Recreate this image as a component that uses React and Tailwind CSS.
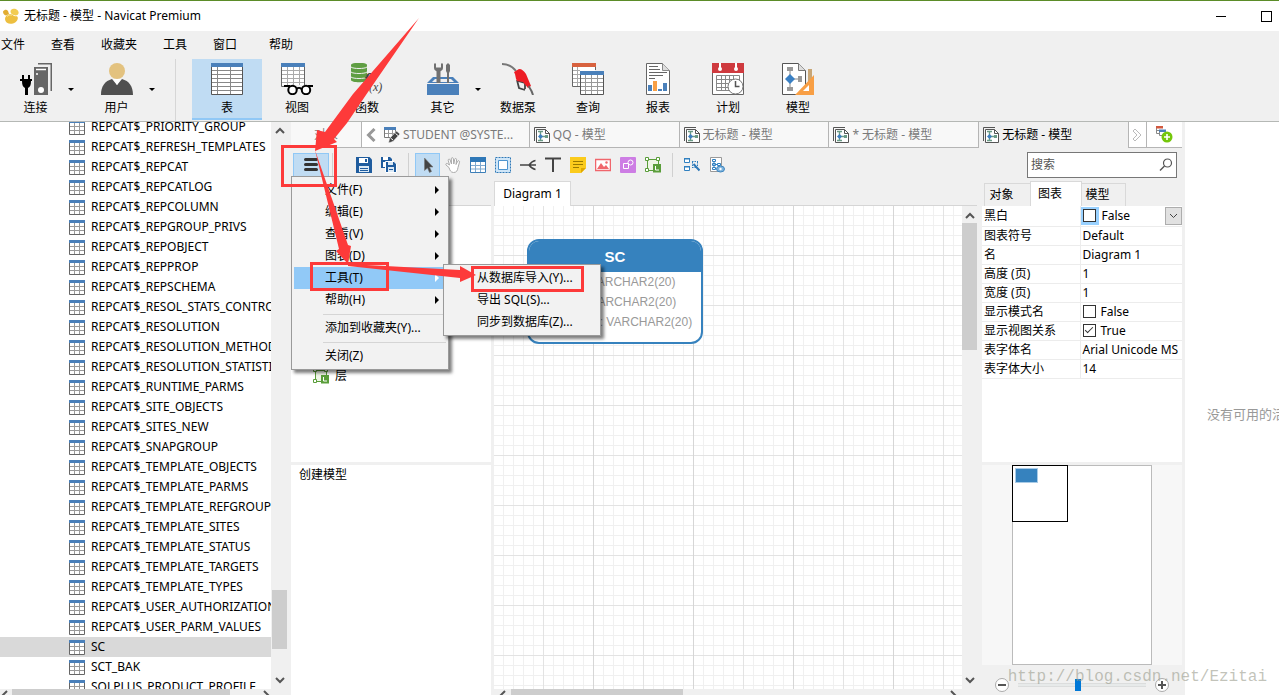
import React, { useState } from 'react';

const TABLES = [
  'REPCAT$_PRIORITY_GROUP', 'REPCAT$_REFRESH_TEMPLATES', 'REPCAT$_REPCAT', 'REPCAT$_REPCATLOG',
  'REPCAT$_REPCOLUMN', 'REPCAT$_REPGROUP_PRIVS', 'REPCAT$_REPOBJECT', 'REPCAT$_REPPROP',
  'REPCAT$_REPSCHEMA', 'REPCAT$_RESOL_STATS_CONTROL', 'REPCAT$_RESOLUTION', 'REPCAT$_RESOLUTION_METHOD',
  'REPCAT$_RESOLUTION_STATISTICS', 'REPCAT$_RUNTIME_PARMS', 'REPCAT$_SITE_OBJECTS', 'REPCAT$_SITES_NEW',
  'REPCAT$_SNAPGROUP', 'REPCAT$_TEMPLATE_OBJECTS', 'REPCAT$_TEMPLATE_PARMS', 'REPCAT$_TEMPLATE_REFGROUPS',
  'REPCAT$_TEMPLATE_SITES', 'REPCAT$_TEMPLATE_STATUS', 'REPCAT$_TEMPLATE_TARGETS', 'REPCAT$_TEMPLATE_TYPES',
  'REPCAT$_USER_AUTHORIZATIONS', 'REPCAT$_USER_PARM_VALUES', 'SC', 'SCT_BAK', 'SQLPLUS_PRODUCT_PROFILE',
];

/* ---------- 小图标 ---------- */

function Svg({ size = 16, children }) {
  return (
    <svg width={size} height={size} viewBox={`0 0 ${size} ${size}`} fill="none" className="shrink-0">
      {children}
    </svg>
  );
}

const TableIcon = () => (
  <Svg>
    <path d="M0.5 3v12.5h15V3" fill="#fff" stroke="#666" />
    <path d="M1 7.5h14M1 11.5h14M5.5 4v11M10.5 4v11" stroke="#999" />
    <path d="M0 1h16v3H0z" fill="#4a80ba" />
  </Svg>
);

const ModelIcon = () => (
  <Svg>
    <path d="M0.5 14V0.5H12" stroke="#555" />
    <path d="M2.5 2.5h9l4 4v9h-13z" fill="#fff" stroke="#555" />
    <path d="M11.5 2.5v4h4" stroke="#555" />
    <path d="M4 4.5h5M4 13.5h5M6.5 5v8M7 9.5h6" stroke="#6a9a86" strokeWidth="1.4" />
    <path d="M6.5 7l2.5 2.5L6.5 12 4 9.5z" fill="#3d7fc0" />
    <path d="M11 8h3v3h-3z" fill="#6a9a86" />
  </Svg>
);

const EditTableIcon = () => (
  <Svg>
    <path d="M0.5 2v8.5h11V2" fill="#fff" stroke="#777" />
    <path d="M1 6.5h10M4.5 3v7M8.5 3v7" stroke="#999" />
    <path d="M0 0h12v3H0z" fill="#4a80ba" />
    <path d="M12.500 4l3.500 3-7 7.500-4.500 1.500 1-4.500z" fill="#444" stroke="#f8f8f8" strokeWidth="0.6" />
    <path d="M11.500 6.500l2.500 2M6.500 11l2.500 2" stroke="#fff" />
  </Svg>
);

const SaveIcon = () => (
  <Svg>
    <path d="M0 0h13.500L16 2.500V16H0z" fill="#1f5c9e" />
    <path d="M3 1h9v5H3z" fill="#fff" />
    <path d="M9 2h2v3H9z" fill="#1f5c9e" />
    <path d="M3 9h10v6H3z" fill="#dce9f5" />
    <path d="M4 11.5h8M4 13.5h8" stroke="#1f5c9e" />
  </Svg>
);

const SaveAllIcon = () => (
  <Svg>
    <path d="M0 0h9l2 2v9H0z" fill="#1f5c9e" />
    <path d="M2 0h5v3H2zM2 5h2v5H2z" fill="#fff" />
    <path d="M4.5 4.5h8.500l2.500 2.500v8.500h-11z" fill="#1f5c9e" stroke="#fff" />
    <path d="M7 5h5v3H7zM7 10h6v5H7z" fill="#dce9f5" />
    <path d="M8 12.5h4" stroke="#1f5c9e" />
  </Svg>
);

const CursorIcon = () => (
  <Svg>
    <path d="M4.500 1v12.500l3-2.500 2 4.500 2-1-2-4.500H13z" fill="#444" stroke="#777" strokeWidth="0.6" />
  </Svg>
);

const HandIcon = () => (
  <Svg>
    <path
      d="M4 10.500L1 8c-.6-.9.500-2.200 1.600-1.300L4.500 8 3.200 3.300c-.2-1.300 1.500-1.700 1.900-.4L6.500 7 6.300 1.800c0-1.500 2-1.500 2.100 0L8.800 7l.9-4.700c.3-1.300 2-1 1.900.4L11 7.500l1.700-3.300c.7-1 2.200-.4 1.800.9L13 10.500c-.5 3.500-1.700 5-4.500 5S4.700 13 4 10.500z"
      fill="#fff" stroke="#aaa"
    />
  </Svg>
);

const GridIcon = () => (
  <Svg>
    <path d="M0.5 1.5h15v14H0.500z" fill="#fff" stroke="#3d7fb8" />
    <path d="M1 8.5h14M1 12h14M5.5 5v10M10.5 5v10" stroke="#7fa9cf" />
    <path d="M0 0h16v5H0z" fill="#2f78b7" />
  </Svg>
);

const RegionIcon = () => (
  <Svg>
    <path d="M0.5 0.5h15v15h-15z" fill="#cfe6f8" stroke="#2f78b7" strokeDasharray="2 1" />
    <path d="M3.5 3.5h9v9h-9z" fill="#fff" stroke="#4d94cf" />
  </Svg>
);

const RelationIcon = () => (
  <Svg>
    <path d="M0 8h16M15.500 3.500C12 4 10.500 6 9 8c1.500 2 3 4 6.500 4.500" stroke="#444" strokeWidth="1.500" />
  </Svg>
);

const TextIcon = () => (
  <Svg>
    <path d="M0 1.500h16M8 1v14" stroke="#444" strokeWidth="2" />
  </Svg>
);

const NoteIcon = () => (
  <Svg>
    <path d="M0 0h16v11l-5 5H0z" fill="#fbcb1c" />
    <path d="M16 11h-5v5z" fill="#e0a800" />
    <path d="M3 4.5h10M3 7.5h10M3 10.5h6" stroke="#9a7a00" />
  </Svg>
);

const ImageIcon = () => (
  <Svg>
    <path d="M0.5 2.5h15v11h-15z" fill="#fff" stroke="#f0666c" strokeWidth="1.500" />
    <path d="M2 12l4-6 3 4 2-2 3 4z" fill="#f0666c" />
    <circle cx="11.500" cy="5.500" r="1.200" fill="#f0666c" />
  </Svg>
);

const ShapeIcon = () => (
  <Svg>
    <rect width="16" height="16" rx="1" fill="#cd7de4" />
    <circle cx="10.500" cy="5.500" r="2.500" stroke="#fff" />
    <path d="M3.500 6.500h5v5h-5z" fill="#cd7de4" stroke="#fff" />
  </Svg>
);

const LayerIcon = () => (
  <Svg>
    <path d="M2.5 2.5h11v11h-11z" fill="#eef5e6" stroke="#5a9e3a" />
    <path d="M0.5 0.5h3v3h-3zM11.5 0.5h3v3h-3zM0.5 11.5h3v3h-3z" fill="#fff" stroke="#5a9e3a" />
    <path d="M8 7h8v8.500H8z" fill="#5a9e3a" />
    <path d="M10.500 9v4H14" stroke="#fff" />
  </Svg>
);

const AutoLayoutIcon = () => (
  <Svg>
    <path d="M0.5 1.500h5v4h-5zM0.5 9.500h5v4h-5z" fill="#fff" stroke="#3080c0" />
    <path d="M0 1h6v1.500H0zM0 9h6v1.500H0z" fill="#3080c0" />
    <path d="M8 4.5h6M8 10.5h5M8.500 5v6M13.500 5v4" stroke="#3080c0" strokeDasharray="1.500 1" />
    <path d="M9.500 7l6 6.500" stroke="#2f78b7" strokeWidth="2" />
  </Svg>
);

const PreviewIcon = () => (
  <Svg>
    <path d="M1.5 0.5h11v14h-11z" fill="#fff" stroke="#999" />
    <path d="M3.5 2.5h3v2h-3zM3.5 10.5h3v2h-3zM8.5 6.5h3v2h-3zM3.5 6.5h3v2h-3zM5 4.5v6M6.5 7.5h2" stroke="#3080c0" />
    <ellipse cx="11.500" cy="12" rx="4" ry="3" fill="#7db3dd" stroke="#3f86bf" />
    <circle cx="11.500" cy="12" r="1.200" fill="#fff" />
  </Svg>
);

const NewTabIcon = () => (
  <svg width="17" height="17" viewBox="0 0 17 17" fill="none">
    <path d="M0.5 1v6.500h7M1 4.5h6" stroke="#888" fill="#fff" />
    <path d="M0 0h7v2.500H0z" fill="#d1593f" />
    <path d="M3.5 4v5.500h6" stroke="#888" fill="#fff" />
    <path d="M3 3.500h7V6H3z" fill="#4a80ba" />
    <circle cx="11" cy="11" r="5.500" fill="#74c70b" />
    <path d="M8 11h6M11 8v6" stroke="#fff" strokeWidth="1.600" />
  </svg>
);

const Logo = () => (
  <svg width="16" height="16" viewBox="0 0 16 16">
    <path d="M0 3.500C1.500 1.500 3.500 1 5 3l1 3-3 1.500C1 7 0 5.500 0 3.500z" fill="#e2ad32" />
    <path d="M7.500 3.500c0-2 2-3 3.500-2.800 2.500 0 4.700 1.800 4.700 4.300-.7 2.500-3 3-5 2-1.700-.8-3.200-1.500-3.200-3.500z" fill="#f2cc52" />
    <path d="M2.500 9C4 6.500 7 5 9 6.500c1.500 1.500 3.500 2 5 1.800 1.500.7 1 4.200-1.500 6-3 2-6.500 2-8.500.5-1.800-1.500-2.500-3.800-1.500-5.800z" fill="#edbf40" />
    <path d="M4 8.500c1.500-1.500 3.500-2 4.500-1" stroke="#fbe79a" fill="none" />
  </svg>
);

/* ---------- 主工具栏图标 ---------- */

const ConnectIcon = () => (
  <Svg size={32}>
    <path d="M18 0.750h13.250V28" stroke="#666" strokeWidth="1.500" />
    <path d="M14 4h14v28H14z" fill="#666" />
    <path d="M16 6.500h10M16 11h2" stroke="#fff" strokeWidth="1.500" />
    <circle cx="21" cy="27" r="3" fill="#fff" />
    <path d="M3 12v5M9 12v5" stroke="#000" strokeWidth="2" />
    <path d="M0 16h12v2h-1c0 4-1 6-3 7v7H5v-7c-2-1-3-3-3-7H0z" fill="#000" />
  </Svg>
);

const UserIcon = () => (
  <Svg size={32}>
    <circle cx="16" cy="8" r="8" fill="#e3c27f" />
    <path d="M0 32c0-9 4-14 11-16l5 6 5-6c7 2 11 7 11 16z" fill="#505050" />
    <path d="M12 16l4 6 4-6z" fill="#fff" />
  </Svg>
);

const BigTableIcon = () => (
  <Svg size={32}>
    <path d="M0.5 2v29.500h31V2" fill="#fff" stroke="#555" />
    <path d="M1 7.5h30M1 11.5h30M1 15.5h30M1 19.5h30M1 23.5h30M1 27.5h30M6.5 4v27M19.5 4v27" stroke="#888" />
    <path d="M0 0h32v4H0z" fill="#4a80ba" />
  </Svg>
);

const ViewIcon = () => (
  <Svg size={32}>
    <path d="M0.5 2v21.500h5M23.5 2v20" stroke="#666" />
    <path d="M1 3h22v19H1z" fill="#fff" />
    <path d="M1 7.5h22M1 11.5h22M1 15.5h22M1 19.5h22M6.5 4v18M12.5 4v18M18.5 4v18" stroke="#aaa" />
    <path d="M0 0h24v4H0z" fill="#4a80ba" />
    <circle cx="11.500" cy="27" r="4.200" fill="#fff" stroke="#000" strokeWidth="2" />
    <circle cx="25" cy="27" r="4.200" fill="#fff" stroke="#000" strokeWidth="2" />
    <path d="M3 23h6M27 23h5M15.500 26c1.500-1.500 3.500-1.500 5 0" stroke="#000" strokeWidth="2" />
  </Svg>
);

const FunctionIcon = () => (
  <Svg size={32}>
    <path d="M0 2c0-3 16-3 16 0v15c0 3-16 3-16 0z" fill="#5f9e43" />
    <path d="M0 4c2 2 14 2 16 0M0 9c2 2 14 2 16 0M0 14c2 2 14 2 16 0" stroke="#efefef" />
    <text x="13" y="23" fontFamily="Liberation Serif" fontStyle="italic" fontWeight="bold" fontSize="18" fill="#444">f</text>
    <text x="18" y="28" fontFamily="Liberation Serif" fontStyle="italic" fontSize="12" fill="#444">(x)</text>
  </Svg>
);

const OtherIcon = () => (
  <Svg size={32}>
    <path d="M6 14h20l6 6H0z" fill="#4a80ba" />
    <path d="M8 16h16l3 3H5z" fill="#efefef" />
    <path d="M9.500 6h4v14h-4z" fill="#707070" />
    <path d="M7 1.500C7 0 9 0 9 1v3.500h5V1c0-1 2-1 2 .5V5c0 2-2 3.500-4.500 3.500S7 7 7 5z" fill="#707070" />
    <path d="M21 0l2 2v6l-1 2v10h-2V10l-1-2V2z" fill="#707070" />
    <path d="M0 21h32v11H0z" fill="#4a80ba" />
  </Svg>
);

const PumpIcon = () => (
  <Svg size={32}>
    <path d="M0 1c6 0 11 3 14 7" stroke="#777" strokeWidth="2" />
    <path d="M15 17l2 8 6 2M16 18l7 2v6" stroke="#444" strokeWidth="1.800" />
    <path d="M12 9l5-3c3 0 5 2 7 5l5 12-3 2-5-6-6-1c-2-3-1-6-3-9z" fill="#ed1c24" />
    <path d="M26.500 23c2 3 3.500 5 4.500 9" stroke="#666" strokeWidth="2" />
  </Svg>
);

const QueryIcon = () => (
  <Svg size={32}>
    <path d="M0.5 2v21.500h8M23.5 2v5" stroke="#666" />
    <path d="M1 3h22v5H8v15H1z" fill="#fff" />
    <path d="M1 7.5h7M1 11.5h7M1 15.5h7M1 19.5h7M5.500 4v19" stroke="#aaa" />
    <path d="M0 0h24v4H0z" fill="#d8623f" />
    <path d="M8.500 10v21.500h23V10" fill="#fff" stroke="#555" />
    <path d="M9 15.5h22M9 19.5h22M9 23.5h22M9 27.5h22M13.500 12v19M19.500 12v19M25.500 12v19" stroke="#999" />
    <path d="M8 8h24v4H8z" fill="#4a80ba" />
  </Svg>
);

const ReportIcon = () => (
  <Svg size={32}>
    <path d="M4.5 0.5h16l7 7v24h-23z" fill="#fff" stroke="#666" />
    <path d="M20.5 0.5v7h7" fill="#ddd" stroke="#888" />
    <path d="M7 3.500h9M7 6.500h11M7 9.500h18M7 12.500h14M7 15.500h6" stroke="#666" />
    <path d="M6 22h4v6H6zM21 20h4v8h-4zM16 26h4v2h-4z" fill="#4a80ba" />
    <path d="M11 18h4v10h-4z" fill="#f89f45" />
  </Svg>
);

const ScheduleIcon = () => (
  <Svg size={32}>
    <path d="M0.5 8v23.500h31V8" fill="#fff" stroke="#666" />
    <path d="M0 0h32v10H0z" fill="#cf3a3f" />
    <path d="M8 0v6M24 0v6" stroke="#fff" strokeWidth="2" />
    <circle cx="8" cy="6" r="2" fill="#fff" />
    <circle cx="24" cy="6" r="2" fill="#fff" />
    <path d="M4.5 12.5h23v15h-23zM5 16.5h22M5 20.5h22M5 24.5h22M9.5 13v14M13.5 13v14M17.5 13v14M21.5 13v14" stroke="#888" />
    <circle cx="23.500" cy="23.500" r="7.500" fill="#fff" stroke="#777" />
    <path d="M23.500 18v5.500h4" stroke="#555" strokeWidth="1.500" />
  </Svg>
);

const BigModelIcon = () => (
  <Svg size={32}>
    <path d="M0.5 0.5h16l7 7v24h-23z" fill="#fff" stroke="#555" />
    <path d="M16.5 0.5v7h7" fill="#ddd" stroke="#777" />
    <path d="M8 6v20M8 16h10" stroke="#888" />
    <path d="M5 4h6v4H5zM5 24h6v4H5zM16 13h4v6h-4z" fill="#999" />
    <path d="M8 11l5 5-5 5-5-5z" fill="#3a80c4" />
    <path d="M26 6h4v26h-4z" fill="#c8a676" />
    <path d="M32 12v20H13z" fill="#f89f45" />
    <path d="M27 22v6h-6z" fill="#fff" />
  </Svg>
);

const Chevron = ({ dir }) => (
  <svg width="10" height="10" viewBox="0 0 10 10" fill="none" className="shrink-0">
    {dir === 'up' && <path d="M1 7l4-4 4 4" stroke="#555" strokeWidth="2" />}
    {dir === 'down' && <path d="M1 3l4 4 4-4" stroke="#555" strokeWidth="2" />}
    {dir === 'left' && <path d="M7 2L3 6l4 4" stroke="#555" strokeWidth="2" />}
    {dir === 'right' && <path d="M3 2l4 4-4 4" stroke="#555" strokeWidth="2" />}
  </svg>
);

/* ---------- 数据 ---------- */

const MAIN_TOOLS = [
  { label: '连接', icon: ConnectIcon, drop: true },
  { label: '用户', icon: UserIcon, drop: true },
  { sep: true },
  { label: '表', icon: BigTableIcon },
  { label: '视图', icon: ViewIcon },
  { label: '函数', icon: FunctionIcon },
  { label: '其它', icon: OtherIcon, drop: true },
  { label: '数据泵', icon: PumpIcon },
  { label: '查询', icon: QueryIcon },
  { label: '报表', icon: ReportIcon },
  { label: '计划', icon: ScheduleIcon },
  { label: '模型', icon: BigModelIcon },
];

const DIAGRAM_TOOLS = [
  ['保存', SaveIcon], ['另存为', SaveAllIcon], null,
  ['选择', CursorIcon], ['移动', HandIcon], ['新建表', GridIcon], ['新建区域', RegionIcon],
  ['关系', RelationIcon], ['文本', TextIcon], ['注释', NoteIcon], ['图像', ImageIcon],
  ['形状', ShapeIcon], ['图层', LayerIcon], null,
  ['自动布局', AutoLayoutIcon], ['预览', PreviewIcon],
];

const MENU = [
  { label: '文件(F)', sub: true },
  { label: '编辑(E)', sub: true },
  { label: '查看(V)', sub: true },
  { label: '图表(D)', sub: true },
  { label: '工具(T)', sub: true, open: ['从数据库导入(Y)...', '导出 SQL(S)...', '同步到数据库(Z)...'] },
  { label: '帮助(H)', sub: true },
  null,
  { label: '添加到收藏夹(Y)...' },
  null,
  { label: '关闭(Z)' },
];

const PROPS = [
  { name: '图表符号', value: 'Default' },
  { name: '名', value: 'Diagram 1' },
  { name: '高度 (页)', value: '1' },
  { name: '宽度 (页)', value: '1' },
  { name: '显示模式名', checked: false },
  { name: '显示视图关系', checked: true },
  { name: '表字体名', value: 'Arial Unicode MS' },
  { name: '表字体大小', value: '14' },
];

/* ---------- 组件 ---------- */

function MainToolbar() {
  return (
    <div className="flex h-[63px] shrink-0 border-b border-[#b5b8b5]">
      <div className="-ml-[5px] flex">
        {MAIN_TOOLS.map((t, i) =>
          t.sep ? (
            <div key={i} className="ml-[18px] mr-[16px] w-px bg-[#d6d6d6]" />
          ) : (
            <button
              key={i}
              className={`relative flex h-[61px] flex-col items-center gap-[5px] pt-1 ${t.drop ? 'w-[81px]' : 'w-[70px]'} ${t.label === '表' ? 'border-b-2 border-[#90c8f6] bg-[#c0dcf3]' : ''}`}
            >
              <t.icon />
              <span className="leading-4">{t.label}</span>
              {t.drop && (
                <span className="absolute right-[2px] top-[29px] border-x-[3px] border-t-[3px] border-x-transparent border-t-black" />
              )}
            </button>
          )
        )}
      </div>
    </div>
  );
}

function TablesTree({ selected, onSelect }) {
  return (
    <div className="flex w-[291px] shrink-0">
      <div className="flex w-[271px] flex-col overflow-hidden bg-white">
        <div className="min-h-0 flex-1 overflow-hidden">
          <ul className="-mt-[5px]">
            {TABLES.map(name => (
              <li key={name}>
                <button
                  onClick={() => onSelect(name)}
                  className={`flex h-5 w-full items-center gap-1.5 whitespace-nowrap pl-[69px] text-left ${name === selected ? 'bg-[#d9d9d9]' : ''}`}
                >
                  <TableIcon />
                  {name}
                </button>
              </li>
            ))}
          </ul>
        </div>
        <div className="flex h-[6px] shrink-0 overflow-hidden bg-[#f0f0f0]">
          <div className="w-3"><Chevron dir="left" /></div>
          <div className="w-[218px] bg-[#cdcdcd]" />
          <div className="ml-auto"><Chevron dir="right" /></div>
        </div>
      </div>
      <div className="flex w-[17px] flex-col items-center pb-[10px] pt-1">
        <Chevron dir="up" />
        <div className="flex-[454_0_0]" />
        <div className="h-[59px] w-[15px] bg-[#cdcdcd]" />
        <div className="flex-[26_0_0]" />
        <Chevron dir="down" />
      </div>
    </div>
  );
}

function DocTab({ icon: Icon, children, active }) {
  return (
    <button
      className={`flex h-[26px] min-w-0 flex-1 items-center gap-[3px] whitespace-nowrap border-r pl-1 text-left ${active ? 'border-[#b5b5b5] text-black' : 'border-b border-[#b5b5b5] bg-[#f8f8f8] text-[#7a7a7a]'}`}
    >
      <Icon />
      <span className="truncate">{children}</span>
    </button>
  );
}

function DocTabs() {
  return (
    <div className="flex shrink-0">
      <button className="h-[26px] w-[71px] border-b border-r border-[#b5b5b5] bg-[#f8f8f8] text-[#7a7a7a]">对象</button>
      <button aria-label="上一个" className="flex h-[26px] w-[18px] items-center justify-center border-b border-[#b5b5b5] bg-white">
        <svg width="10" height="14" viewBox="0 0 10 14" fill="none">
          <path d="M8.500 1L2.500 7l6 6" stroke="#999" strokeWidth="3" />
        </svg>
      </button>
      <DocTab icon={EditTableIcon}>STUDENT @SYSTE...</DocTab>
      <DocTab icon={ModelIcon}>QQ - 模型</DocTab>
      <DocTab icon={ModelIcon}>无标题 - 模型</DocTab>
      <DocTab icon={ModelIcon}>* 无标题 - 模型</DocTab>
      <DocTab icon={ModelIcon} active>无标题 - 模型</DocTab>
      <button aria-label="下一个" className="flex h-[26px] w-[18px] items-center justify-center border-b border-r border-[#b5b5b5] bg-white">
        <svg width="10" height="14" viewBox="0 0 10 14" fill="none">
          <path d="M1 3l2-2 6 6-6 6-2-2 4-4z" fill="#fff" stroke="#bbb" />
        </svg>
      </button>
      <button aria-label="新建" className="flex h-[26px] w-[35px] items-center justify-center border-b border-[#b5b5b5] bg-white">
        <NewTabIcon />
      </button>
    </div>
  );
}

function ContextMenu() {
  return (
    <div className="absolute left-0 top-7 z-20 w-[158px] border border-[#9a9a9a] bg-[#f2f2f2] p-[2px] shadow-[3px_3px_3px_rgba(0,0,0,0.5)]">
      {MENU.map((item, i) =>
        item === null ? (
          <div key={i} className="ml-[29px] flex h-[6px] items-center"><div className="h-px flex-1 bg-[#d5d5d5]" /></div>
        ) : (
          <div key={i} className="relative">
            <button className={`flex h-[22px] w-full items-center whitespace-nowrap pl-[31px] pr-[7px] text-left ${item.open ? 'bg-[#91c9f7]' : ''}`}>
              {item.label}
              {item.sub && (
                <span className={`ml-auto border-y-4 border-l-4 border-y-transparent ${item.open ? 'border-l-white' : 'border-l-black'}`} />
              )}
            </button>
            {item.open && (
              <div className="absolute -top-[3px] left-[149px] w-[158px] border border-[#9a9a9a] bg-[#f2f2f2] p-[2px] shadow-[3px_3px_3px_rgba(0,0,0,0.5)]">
                {item.open.map(label => (
                  <button key={label} className="flex h-[22px] w-full items-center whitespace-nowrap pl-[31px] text-left">
                    {label}
                  </button>
                ))}
              </div>
            )}
          </div>
        )
      )}
    </div>
  );
}

function DiagramToolbar() {
  return (
    <div className="relative flex h-[33px] shrink-0 items-center pl-[2px] pr-[5px]">
      <button aria-label="菜单" className="flex h-6 w-[36px] items-center justify-center border border-[#90c8f6] bg-[#c0dcf3]">
        <svg width="14" height="13" viewBox="0 0 14 13">
          <path d="M1.500 1.500h11M1.500 6.500h11M1.500 11.500h11" stroke="#333" strokeWidth="3" strokeLinecap="round" />
        </svg>
      </button>
      <div className="ml-[3px] mr-[18px] h-6 w-px bg-[#d0d0d0]" />
      {DIAGRAM_TOOLS.map((t, i) => {
        if (!t) return <div key={i} className="ml-[7px] mr-[6px] h-6 w-px bg-[#d0d0d0]" />;
        const [label, Icon] = t;
        return (
          <button
            key={i}
            aria-label={label}
            className={`flex h-6 w-[25px] items-center justify-center ${label === '选择' ? 'border border-[#90c8f6] bg-[#c0dcf3]' : ''}`}
          >
            <Icon />
          </button>
        );
      })}
      <div className="ml-auto flex h-[26px] w-[150px] items-center border border-[#777] bg-white px-[3px]">
        <input aria-label="搜索" placeholder="搜索" className="min-w-0 flex-1 outline-none placeholder:text-[#555]" />
        <svg width="14" height="14" viewBox="0 0 14 14" fill="none">
          <circle cx="8.500" cy="5" r="4" stroke="#555" strokeWidth="1.200" />
          <path d="M5.500 8L1 12.500" stroke="#555" strokeWidth="1.400" />
        </svg>
      </div>
      <ContextMenu />
    </div>
  );
}

function Explorer() {
  return (
    <div className="flex w-[200px] shrink-0 flex-col gap-[3px] pt-6">
      <div className="h-[257px] border-t border-[#d5d5d5] bg-white pl-[22px] pt-[162px]">
        <div className="flex items-center gap-1.5">
          <LayerIcon />
          层
        </div>
      </div>
      <div className="flex-1 bg-white px-2 pt-0.5">创建模型</div>
    </div>
  );
}

function Entity() {
  return (
    <div className="absolute left-[33px] top-[33px] h-[105px] w-[176px] overflow-hidden rounded-xl border-2 border-[#3682be] bg-white font-['Liberation_Sans',sans-serif]">
      <div className="flex h-[31px] items-center justify-center bg-[#3682be] text-[15px] font-bold text-white">SC</div>
      <ul className="pl-7 leading-5 text-[#999]">
        <li>SNO: VARCHAR2(20)</li>
        <li>CNO: VARCHAR2(20)</li>
        <li>GRADE: VARCHAR2(20)</li>
      </ul>
    </div>
  );
}

function Diagram() {
  return (
    <div className="flex min-w-0 flex-1 flex-col">
      <div className="flex h-[25px] shrink-0 border-b border-[#d5d5d5]">
        <button className="h-[25px] w-[77px] border-x border-t border-[#d9d9d9] bg-white">Diagram 1</button>
      </div>
      <div className="flex min-h-0 flex-1">
        <div className="flex min-w-0 flex-1 flex-col">
          <div className="relative flex-1 overflow-hidden bg-white bg-[linear-gradient(to_right,#d6d6d6_1px,transparent_1px),linear-gradient(to_right,#e3e3e3_1px,transparent_1px),linear-gradient(to_bottom,#e3e3e3_1px,transparent_1px),linear-gradient(to_right,#f0f0f0_1px,transparent_1px),linear-gradient(to_bottom,#f0f0f0_1px,transparent_1px)] bg-[size:100px_100px,50px_50px,50px_50px,10px_10px,10px_10px] bg-[position:99px_0,49px_0,0_49px,9px_0,0_9px]">
            <Entity />
          </div>
          <div className="flex h-[6px] shrink-0 overflow-hidden">
            <div className="w-[17px] pl-1"><Chevron dir="left" /></div>
            <div className="w-[172px] bg-[#cdcdcd]" />
            <div className="ml-auto pr-1"><Chevron dir="right" /></div>
          </div>
        </div>
        <div className="flex w-[15px] flex-col items-center pb-[10px] pt-[5px]">
          <Chevron dir="up" />
          <div className="mt-[2px] h-[127px] w-[15px] bg-[#cdcdcd]" />
          <div className="mt-auto flex"><Chevron dir="down" /></div>
        </div>
      </div>
    </div>
  );
}

function Check({ id, checked, onChange }) {
  return (
    <input
      id={id}
      type="checkbox"
      checked={checked}
      onChange={onChange}
      className="size-[13px] shrink-0 appearance-none border border-[#333] bg-white checked:before:mx-auto checked:before:block checked:before:h-2 checked:before:w-1 checked:before:rotate-45 checked:before:border-b checked:before:border-r checked:before:border-[#333] checked:before:content-['']"
    />
  );
}

function Inspector() {
  const [mono, setMono] = useState(false);
  const [flags, setFlags] = useState({ 显示模式名: false, 显示视图关系: true });
  const [zoom, setZoom] = useState(47);

  return (
    <div className="flex w-[200px] shrink-0 flex-col">
      <div className="flex h-[25px] shrink-0 items-end pl-[2px]">
        <button className="h-[23px] w-[46px] border-l border-t border-[#d9d9d9] pr-3">对象</button>
        <button className="h-[25px] w-[52px] border-x border-t border-[#d9d9d9] bg-white pr-3">图表</button>
        <button className="h-[23px] w-[44px] border-r border-t border-[#d9d9d9] pr-3">模型</button>
      </div>
      <div className="h-[256px] shrink-0 bg-white">
        <table className="w-full table-fixed border-collapse">
          <tbody>
            <tr className="h-[20px] border-b border-[#ececec]">
              <td className="w-[98px] p-0 pl-[2px]"><label htmlFor="mono">黑白</label></td>
              <td className="border-l border-[#ececec] p-0 leading-[18px]">
                <div className="flex h-[18px] items-center gap-[3px]">
                  <span className="flex h-[18px] w-[18px] items-center justify-center bg-[#99d1ff]">
                    <Check id="mono" checked={mono} onChange={() => setMono(!mono)} />
                  </span>
                  {mono ? 'True' : 'False'}
                  <button aria-label="展开" className="ml-auto flex h-[18px] w-[17px] items-center justify-center border border-[#adadad] bg-[#e1e1e1]">
                    <svg width="9" height="6" viewBox="0 0 9 6" fill="none"><path d="M1 1l3.500 3.500L8 1" stroke="#444" /></svg>
                  </button>
                </div>
              </td>
            </tr>
            {PROPS.map(p => (
              <tr key={p.name} className="h-[19px] border-b border-[#ececec]">
                <td className="p-0 pl-[2px] leading-[18px]">
                  {p.value ? p.name : <label htmlFor={p.name}>{p.name}</label>}
                </td>
                <td className="overflow-hidden whitespace-nowrap border-l border-[#ececec] p-0 pl-[2px] leading-[18px]">
                  {p.value || (
                    <div className="flex h-[18px] items-center gap-[5px]">
                      <Check
                        id={p.name}
                        checked={flags[p.name]}
                        onChange={() => setFlags({ ...flags, [p.name]: !flags[p.name] })}
                      />
                      {flags[p.name] ? 'True' : 'False'}
                    </div>
                  )}
                </td>
              </tr>
            ))}
          </tbody>
        </table>
      </div>

      {/* 缩略图 */}
      <div className="mt-[3px] flex min-h-0 flex-1 justify-center bg-[#f7f7f7]">
        <div className="w-[140px] border border-[#bbb] bg-white">
          <div className="-ml-px -mt-px h-[57px] w-[56px] border border-black p-[2px]">
            <div className="h-[15px] w-[23px] border border-[#a9cbe6] bg-[#3682be]" />
          </div>
        </div>
      </div>
      <div className="flex h-[30px] shrink-0 items-center gap-[9px] px-[13px] pt-[10px]">
        <button aria-label="缩小">
          <svg width="14" height="14" viewBox="0 0 14 14" fill="#fff">
            <circle cx="7" cy="7" r="6.500" stroke="#aaa" />
            <path d="M3 7h8" stroke="#555" strokeWidth="2" />
          </svg>
        </button>
        <input
          type="range"
          aria-label="缩放"
          value={zoom}
          onChange={e => setZoom(Number(e.target.value))}
          className="h-[13px] min-w-0 flex-1 appearance-none bg-[linear-gradient(#d0d0d0,#e7eaea_1px,#e7eaea_3px,#d0d0d0)] bg-[size:100%_4px] bg-center bg-no-repeat [&::-webkit-slider-thumb]:h-3 [&::-webkit-slider-thumb]:w-[6px] [&::-webkit-slider-thumb]:appearance-none [&::-webkit-slider-thumb]:bg-[#0078d7]"
        />
        <button aria-label="放大">
          <svg width="14" height="14" viewBox="0 0 14 14" fill="#fff">
            <circle cx="7" cy="7" r="6.500" stroke="#aaa" />
            <path d="M3 7h8M7 3v8" stroke="#555" strokeWidth="2" />
          </svg>
        </button>
      </div>
    </div>
  );
}

// 红色标注
function Annotations() {
  return (
    <svg width="640" height="320" viewBox="0 1 640 320" fill="none" className="pointer-events-none absolute left-0 top-0 z-30">
      <g stroke="#fd3a3a" strokeWidth="3">
        <path d="M282.500 146.500h53v39h-53z" />
        <path d="M311.500 263.500h76v26h-76z" />
        <path d="M472.500 267.500h110v23h-110z" />
      </g>
      <g fill="#fd3a3a">
        <path d="M419 18L353 94 325 132 317 130 315 151 337 142 334 139 347 123 368 92z" />
        <path d="M315 150l24 99-3 2 12 13 3-18-3-1z" />
        <path d="M348 264l112 6v-4l16 9-16 7v-4l-112-12z" />
      </g>
    </svg>
  );
}

function App() {
  const [selected, setSelected] = useState('SC');

  return (
    <div className="relative flex h-screen flex-col overflow-hidden border-t border-[#5b8c28] bg-[#f0f0f0] font-['Noto_Sans','Noto_Sans_CJK_SC',sans-serif] text-xs text-black">
      <header className="flex h-[30px] shrink-0 items-center gap-[5px] bg-white pl-[3px]">
        <Logo />
        <span>无标题 - 模型 - Navicat Premium</span>
        <button aria-label="最小化" className="ml-auto h-px w-[10px] bg-black" />
        <button aria-label="最大化" className="ml-[30px] mr-[7px] size-[11px] border border-black" />
      </header>

      <nav className="flex h-7 shrink-0 items-center pl-px">
        <div className="flex gap-[26px]">
          {['文件', '查看', '收藏夹', '工具', '窗口', '帮助'].map(m => (
            <button key={m} className="last:ml-1.5">{m}</button>
          ))}
        </div>
      </nav>

      <MainToolbar />

      <div className="flex min-h-0 flex-1">
        <TablesTree selected={selected} onSelect={setSelected} />
        <main className="flex min-w-0 flex-1 flex-col">
          <DocTabs />
          <DiagramToolbar />
          <div className="flex min-h-0 flex-1">
            <Explorer />
            <div className="ml-[3px] mr-[5px] flex min-w-0 flex-1">
              <Diagram />
            </div>
            <Inspector />
          </div>
        </main>
        <aside className="ml-[3px] flex w-[94px] shrink-0 items-center overflow-hidden whitespace-nowrap bg-white pl-[22px] pt-3 text-[13px] text-[#999]">
          没有可用的活动
        </aside>
      </div>

      <Annotations />
      <div className="pointer-events-none absolute bottom-[7px] right-3 z-30 font-['Liberation_Mono',monospace] text-[16px] text-[#999b8c]/60">
        http://blog.csdn.net/Ezitai
      </div>
    </div>
  );
}

export default App;
